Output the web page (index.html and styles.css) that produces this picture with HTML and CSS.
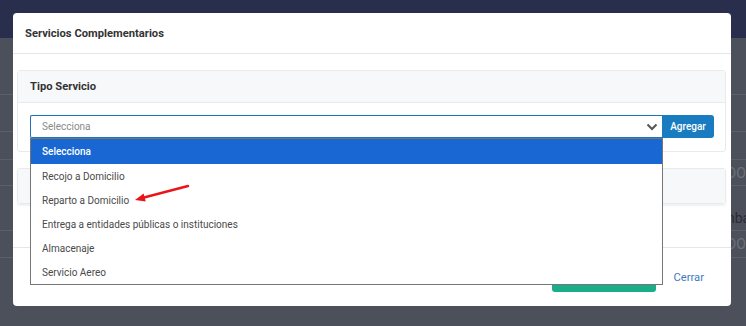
FILE: index.html
```html
<!DOCTYPE html>
<html lang="es">
<head>
    <meta charset="UTF-8">
    <meta name="viewport" content="width=device-width, initial-scale=1.0">
    <title>Servicios Complementarios</title>
    <link rel="stylesheet" href="styles.css">
</head>
<body>
    <!-- Page behind the modal (dimmed) -->
    <div class="page">
        <div class="topbar"></div>
        <div class="rows">
            <div class="row r1"></div>
            <div class="row r2"></div>
            <div class="row r3"></div>
            <div class="row r4"><span class="cell muted">DOS</span></div>
            <div class="row r5"><span class="cell dark">nba</span></div>
            <div class="row r6"><span class="cell muted">DOS</span></div>
            <div class="row r7"></div>
        </div>
    </div>

    <!-- Modal -->
    <div class="modal">
        <div class="modal-header">
            <h1>Servicios Complementarios</h1>
        </div>

        <div class="modal-body">
            <div class="card">
                <div class="card-header">Tipo Servicio</div>
                <div class="card-body">
                    <div class="input-group">
                        <div class="select">
                            <span class="select-value">Selecciona</span>
                            <svg class="chevron" width="12" height="8" viewBox="0 0 12 8">
                                <path d="M1.5 1.5 L6 6 L10.5 1.5" fill="none" stroke="#555" stroke-width="2"/>
                            </svg>
                            <ul class="dropdown">
                                <li class="active">Selecciona</li>
                                <li>Recojo a Domicilio</li>
                                <li>Reparto a Domicilio</li>
                                <li>Entrega a entidades públicas o instituciones</li>
                                <li>Almacenaje</li>
                                <li>Servicio Aereo</li>
                            </ul>
                        </div>
                        <button class="btn-add">Agregar</button>
                    </div>
                </div>
            </div>

            <div class="card card-second">
                <div class="card-header"></div>
            </div>
        </div>

        <div class="modal-footer">
            <button class="btn-save"></button>
            <a href="#" class="link-close">Cerrar</a>
        </div>

        <!-- annotation arrow -->
        <svg class="annotation" width="64" height="24" viewBox="0 0 64 24">
            <line x1="58" y1="4" x2="14" y2="15.5" stroke="#e8161b" stroke-width="2.4" stroke-linecap="round"/>
            <path d="M5 18 L15.7 19.5 L13.6 11.4 Z" fill="#e8161b"/>
        </svg>
    </div>
</body>
</html>
```

FILE: styles.css
```css
body {
    margin: 0;
    padding: 0;
    font-family: Roboto, "Liberation Sans", Arial, sans-serif;
    background-color: #4c505a;
    overflow: hidden;
}
.page {
    width: 746px;
    height: 326px;
}
.topbar {
    height: 38px;
    background-color: #282e4c;
}
.row {
    border-bottom: 1px solid #5b5f69;
    box-sizing: border-box;
    display: flex;
    align-items: center;
    font-size: 14px;
}
.r1 { height: 57px; }
.r2 { height: 37px; }
.r3 { height: 28px; }
.r4 { height: 26px; }
.r5 { height: 45px; padding-top: 20px; }
.r6 { height: 27px; }
.r7 { height: 30px; border-bottom: none; }
.cell {
    padding-left: 727px;
    white-space: nowrap;
}
.muted { color: #6d7079; }
.dark { color: #2a2c33; }

/* modal */
.modal {
    position: absolute;
    left: 13px;
    top: 13px;
    width: 718px;
    height: 293px;
    background: #fff;
    border-radius: 4px;
    display: flex;
    flex-direction: column;
}
.modal-header {
    height: 40px;
    border-bottom: 1px solid #e4e6ea;
    display: flex;
    align-items: center;
    padding-left: 12px;
}
.modal-header h1 {
    margin: 0;
    font-size: 11.2px;
    font-weight: 700;
    color: #333;
}
.modal-body {
    padding: 16px 5px 0 4px;
    height: 177px;
}
.card {
    border: 1px solid #e8eaee;
    border-radius: 3px;
}
.card-header {
    height: 31px;
    background: #f7f8fa;
    border-bottom: 1px solid #e8eaee;
    display: flex;
    align-items: center;
    padding-left: 12px;
    font-size: 11.2px;
    font-weight: 700;
    color: #333;
}
.card-body {
    padding: 12px 11px 13px 12px;
}
.card-second {
    margin-top: 16px;
    box-shadow: 0 2px 2px rgba(0, 0, 0, 0.06);
}
.card-second .card-header {
    height: 34px;
    border-bottom: none;
}
.input-group {
    display: flex;
    height: 23px;
}
.select {
    position: relative;
    flex: 1;
    border: 1px solid #1f72b6;
    border-right: none;
    border-radius: 2px 0 0 2px;
    display: flex;
    align-items: center;
    padding-left: 11px;
    font-size: 10px;
    color: #8a8a8a;
}
.select-value {
    flex: 1;
}
.chevron {
    margin-right: 4px;
}
.dropdown {
    position: absolute;
    top: 22px;
    left: -1px;
    right: -1px;
    margin: 0;
    padding: 0;
    list-style-type: none;
    background: #fff;
    border: 1px solid #767676;
    z-index: 5;
}
.dropdown li {
    height: 24px;
    line-height: 26px;
    padding-left: 11px;
    font-size: 10px;
    color: #4a4a4a;
}
.dropdown li.active {
    height: 25px;
    background-color: #1967d2;
    color: #fff;
    font-weight: 500;
}
.btn-add {
    width: 52px;
    border: none;
    border-radius: 0 3px 3px 0;
    background-color: #1a7cc0;
    color: #fff;
    font-family: inherit;
    font-size: 10px;
    font-weight: 500;
    padding: 0;
}
.modal-footer {
    flex: 1;
    border-top: 1px solid #e4e6ea;
    display: flex;
    align-items: center;
    justify-content: flex-end;
    padding-right: 27px;
}
.btn-save {
    width: 104px;
    height: 29px;
    border: none;
    border-radius: 3px;
    background-color: #1aae88;
    margin-right: 18px;
}
.link-close {
    color: #3f7bc3;
    font-size: 11.2px;
    text-decoration: none;
}
.annotation {
    position: absolute;
    left: 117px;
    top: 169px;
    z-index: 6;
}
```
